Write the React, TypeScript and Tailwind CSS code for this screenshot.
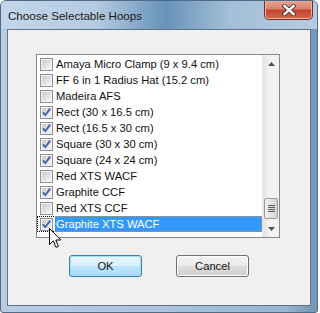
import React from 'react';

const hoops = [
  { name: 'Amaya Micro Clamp (9 x 9.4 cm)', checked: false },
  { name: 'FF 6 in 1 Radius Hat (15.2 cm)', checked: false },
  { name: 'Madeira AFS', checked: false },
  { name: 'Rect (30 x 16.5 cm)', checked: true },
  { name: 'Rect (16.5 x 30 cm)', checked: true },
  { name: 'Square (30 x 30 cm)', checked: true },
  { name: 'Square (24 x 24 cm)', checked: true },
  { name: 'Red XTS WACF', checked: false },
  { name: 'Graphite CCF', checked: true },
  { name: 'Red XTS CCF', checked: false },
  { name: 'Graphite XTS WACF', checked: true, selected: true },
];

function CheckBox({ checked }: { checked: boolean }) {
  return (
    <svg width="13" height="13" viewBox="0 0 13 13" className="shrink-0">
      <defs>
        <linearGradient id="cbfill" x1="0" y1="0" x2="1" y2="1">
          <stop offset="0" stopColor="#c9ccd1" />
          <stop offset="1" stopColor="#f6f6f6" />
        </linearGradient>
      </defs>
      <rect x="0.5" y="0.5" width="12" height="12" fill="#f4f4f4" stroke="#8e8f8f" />
      <rect x="2" y="2" width="9" height="9" fill="url(#cbfill)" />
      {checked && (
        <path d="M3 6.2 L5.2 9.2 L10.2 2.6" fill="none" stroke="#4b5fa6" strokeWidth="1.9" strokeLinejoin="round" />
      )}
    </svg>
  );
}

function ScrollBar() {
  return (
    <div className="w-[17px] h-full flex flex-col bg-[linear-gradient(90deg,#e3e3e3,#f3f3f3_40%,#f0f0f0)] border-l border-[#e9e9e9]">
      <div className="h-[17px] flex items-center justify-center">
        <svg width="7" height="4" viewBox="0 0 7 4">
          <path d="M0 4 L3.5 0 L7 4 Z" fill="#4d4d4d" />
        </svg>
      </div>
      <div className="flex-1 flex flex-col justify-end pb-[1px]">
        <div className="mx-[1px] h-[21px] rounded-[2px] border border-[#9a9a9a] bg-[linear-gradient(90deg,#f2f2f2,#e3e3e3_50%,#d2d2d2)] flex flex-col items-center justify-center gap-[1px]">
          <div className="w-[7px] h-[1px] bg-[#5a5a5a]" />
          <div className="w-[7px] h-[1px] bg-[#5a5a5a]" />
          <div className="w-[7px] h-[1px] bg-[#5a5a5a]" />
          <div className="w-[7px] h-[1px] bg-[#5a5a5a]" />
        </div>
      </div>
      <div className="h-[17px] flex items-center justify-center">
        <svg width="7" height="4" viewBox="0 0 7 4">
          <path d="M0 0 L3.5 4 L7 0 Z" fill="#4d4d4d" />
        </svg>
      </div>
    </div>
  );
}

function Cursor() {
  return (
    <svg width="13" height="21" viewBox="0 0 13 21" className="absolute left-[48px] top-[227px]">
      <path d="M0.5 0.5 L0.5 16.5 L4.3 12.8 L7 19.3 L9.4 18.3 L6.8 12 L11.8 12 Z" fill="#ffffff" stroke="#000000" strokeWidth="1" strokeLinejoin="miter" />
    </svg>
  );
}

function WinButton({ label, primary }: { label: string; primary?: boolean }) {
  return (
    <button
      className={`w-[73px] h-[22px] rounded-[3px] border text-[11.2px] text-[#111] ${
        primary
          ? 'border-[#3c7fb1] bg-[linear-gradient(180deg,#eaf6fd,#d9f0fc_50%,#bee6fd_51%,#a7d9f5)] shadow-[inset_0_0_0_1px_#9fe0f8]'
          : 'border-[#707070] bg-[linear-gradient(180deg,#f2f2f2,#ebebeb_50%,#dddddd_51%,#cfcfcf)] shadow-[inset_0_0_0_1px_#fcfcfc]'
      }`}
    >
      {label}
    </button>
  );
}

export default function App() {
  return (
    <div
      className="relative w-[318px] h-[313px] flex flex-col rounded-t-[6px] rounded-b-[3px] border border-[#4f6b88] bg-[linear-gradient(90deg,#b9cde2,#adc4db_50%,#98b3cd_90%,#7394b4)] overflow-hidden"
      style={{ fontFamily: '"Liberation Sans", Arial, sans-serif' }}
    >
      <div className="h-[28px] flex justify-between bg-[linear-gradient(90deg,#c3d6e9_0%,#b5cbe1_30%,#6893ba_52%,#a3bed8_72%,#b6cbe1_100%)]">
        <div className="pl-[7px] pt-[7px] text-[11.6px] leading-[15px] text-[#1a1a1a]">Choose Selectable Hoops</div>
        <div className="mr-[4px] -mt-[1px] w-[49px] h-[20px] rounded-b-[5px] border border-t-0 border-[#7a2c21] bg-[linear-gradient(180deg,#e9ab9c,#d9826e_45%,#c7422b_55%,#d06a50)] shadow-[inset_0_0_0_1px_#eeb3a4] flex items-center justify-center">
          <svg width="14" height="12" viewBox="0 0 14 12">
            <path d="M2.5 2 L11.5 10 M11.5 2 L2.5 10" stroke="#4a2a26" strokeWidth="4.2" strokeLinecap="square" />
            <path d="M2.5 2 L11.5 10 M11.5 2 L2.5 10" stroke="#ffffff" strokeWidth="2.4" strokeLinecap="square" />
          </svg>
        </div>
      </div>

      <div className="ml-[6px] w-[304px] h-[277px] border border-[#5f7388] bg-[#f0f0f0] flex flex-col pt-[24px] pl-[28px]">
        <div className="w-[244px] h-[184px] border border-[#828790] bg-white flex">
          <div className="flex-1 pt-[1px] flex flex-col">
            {hoops.map((h) => (
              <div
                key={h.name}
                className={`h-[16px] flex items-center pl-[2px] border ${
                  h.selected ? 'border-dotted border-black' : 'border-transparent'
                }`}
              >
                <CheckBox checked={h.checked} />
                <span
                  className={`ml-[2px] flex-1 pl-[1px] text-[11.2px] whitespace-nowrap ${
                    h.selected
                      ? 'bg-[#3399ff] text-white border border-l-0 border-dotted border-[#d98a3a] -my-[1px] -mr-[1px] h-[16px] leading-[14px]'
                      : 'text-[#111] h-[14px] leading-[14px]'
                  }`}
                >
                  {h.name}
                </span>
              </div>
            ))}
          </div>
          <ScrollBar />
        </div>
        <div className="mt-[17px] ml-[33px] flex gap-[34px]">
          <WinButton label="OK" primary />
          <WinButton label="Cancel" />
        </div>
      </div>

      <Cursor />
    </div>
  );
}
